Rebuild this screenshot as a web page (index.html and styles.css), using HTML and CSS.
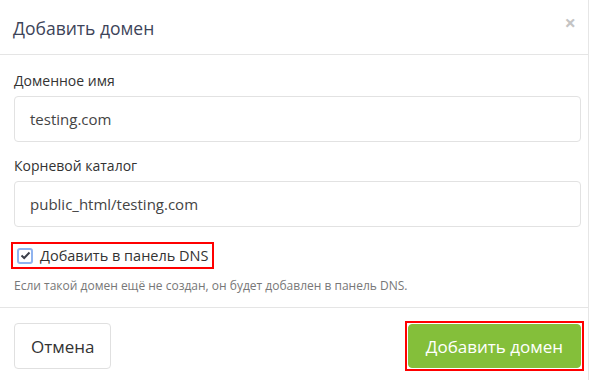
FILE: index.html
```html
<!DOCTYPE html>
<html lang="ru">

<head>
    <meta charset="UTF-8">
    <meta name="viewport" content="width=device-width, initial-scale=1.0">
    <title>Добавить домен</title>
    <link rel="stylesheet" href="styles.css">
</head>

<body>
    <div class="modal">
        <div class="modal-header">
            <h4>Добавить домен</h4>
            <span class="close">&times;</span>
        </div>
        <div class="modal-body">
            <div class="field">
                <label>Доменное имя</label>
                <div class="input">testing.com</div>
            </div>
            <div class="field">
                <label>Корневой каталог</label>
                <div class="input">public_html/testing.com</div>
            </div>
            <div class="check-row">
                <span class="checkbox">
                    <svg width="11" height="9" viewBox="0 0 11 9">
                        <path d="M1.5 4.5 L4.2 7 L9.5 1.5" fill="none" stroke="#3b3f4a" stroke-width="2"/>
                    </svg>
                </span>
                <span>Добавить в панель DNS</span>
            </div>
            <p class="help">Если такой домен ещё не создан, он будет добавлен в панель DNS.</p>
        </div>
        <div class="modal-footer">
            <button class="btn">Отмена</button>
            <div class="highlight">
                <button class="btn btn-green">Добавить домен</button>
            </div>
        </div>
    </div>
</body>

</html>
```

FILE: styles.css
```css
* {
    margin: 0;
    padding: 0;
    box-sizing: border-box;
}

body {
    background: #fff;
    font-family: 'Open Sans', 'Noto Sans', sans-serif;
    color: #333;
}

.modal {
    width: 589px;
    height: 380px;
    border-right: 1px solid #e6e6e6;
}

.modal-header {
    display: flex;
    justify-content: space-between;
    align-items: center;
    height: 55px;
    padding: 0 8px 0 13px;
    border-bottom: 1px solid #e5e5e5;
}

.modal-header h4 {
    font-size: 17.5px;
    font-weight: normal;
    color: #3d4459;
    margin-top: 2px;
}

.close {
    color: #c4c4c4;
    font-size: 20px;
    font-weight: bold;
    margin: -10px 4px 0 0;
}

.modal-body {
    padding: 16px 7px 13px 14px;
    border-bottom: 1px solid #e5e5e5;
}

.field {
    margin-bottom: 14px;
}

.field label {
    display: block;
    font-size: 14px;
    color: #333;
    margin-bottom: 6px;
}

.input {
    height: 46px;
    border: 1px solid #e2e2e2;
    border-radius: 4px;
    padding: 12px 15px;
    font-size: 15px;
    color: #444;
}

.check-row {
    display: inline-flex;
    align-items: center;
    gap: 7px;
    margin: 1px 0 0 -3px;
    padding: 2px 4px 2px 4px;
    border: 2px solid #ff0000;
    font-size: 14.5px;
    color: #333;
}

.checkbox {
    display: flex;
    align-items: center;
    justify-content: center;
    width: 16px;
    height: 16px;
    border: 2px solid #8fb3ef;
    border-radius: 3px;
}

.help {
    margin-top: 8px;
    font-size: 12px;
    color: #777;
}

.modal-footer {
    display: flex;
    justify-content: space-between;
    align-items: center;
    padding: 13px 4px 0 14px;
}

.btn {
    height: 46px;
    padding: 0 16px;
    border: 1px solid #e0e0e0;
    border-radius: 4px;
    background: #fff;
    font-family: inherit;
    font-size: 17px;
    color: #333;
}

.highlight {
    padding: 1px;
    border: 2px solid #ff0000;
}

.btn-green {
    height: 44px;
    padding: 0 17px;
    border-color: #84bf3a;
    background: #84bf3a;
    color: #fff;
}
```
